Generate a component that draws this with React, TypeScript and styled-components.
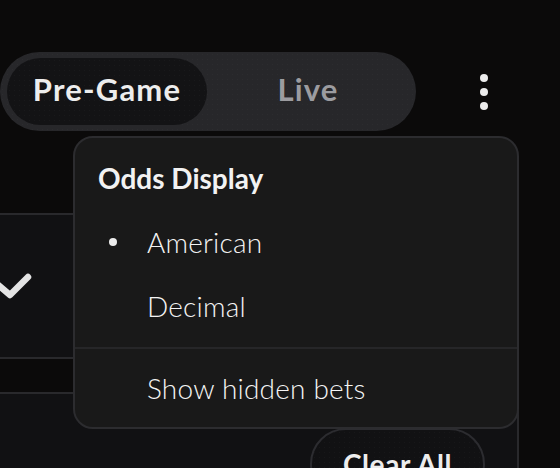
import React from "react";
import styled, { createGlobalStyle } from "styled-components";

const GlobalStyle = createGlobalStyle`
  html, body {
    margin: 0;
    padding: 0;
    background: #0b0a0a;
    overflow: hidden;
    font-family: "Lato", "Inter", sans-serif;
    color: #f2f2f2;
  }
`;

const dots = `radial-gradient(rgba(255, 255, 255, 0.025) 0.8px, transparent 1px) 0 0 / 5px 5px`;

const Page = styled.div`
  position: relative;
  width: 560px;
  height: 468px;
  overflow: hidden;
`;

const Header = styled.div`
  display: flex;
  align-items: center;
  padding-top: 52px;
`;

const Toggle = styled.div`
  display: flex;
  width: 416px;
  height: 79px;
  box-sizing: border-box;
  padding: 6px 7px;
  border-radius: 40px;
  background: ${dots}, #27272a;
`;

const Segment = styled.div<{ $active?: boolean }>`
  display: flex;
  align-items: center;
  justify-content: center;
  width: ${(p) => (p.$active ? "200px" : "auto")};
  flex: ${(p) => (p.$active ? "0 0 auto" : "1")};
  box-sizing: border-box;
  padding-bottom: 5px;
  border-radius: 34px;
  background: ${(p) => (p.$active ? `${dots}, #131315` : "transparent")};
  color: ${(p) => (p.$active ? "#ededed" : "#9c9ca0")};
  font-size: 31px;
  font-weight: 700;
  letter-spacing: 1.2px;
`;

const Kebab = styled.button`
  display: flex;
  align-items: center;
  justify-content: center;
  width: 48px;
  height: 48px;
  margin-left: 44px;
  padding: 0;
  border: none;
  background: transparent;
  color: #ececec;
`;

const Cards = styled.div`
  display: flex;
  flex-direction: column;
  gap: 33px;
  margin-top: 82px;
`;

const Card = styled.div<{ $tall?: boolean }>`
  display: flex;
  align-items: ${(p) => (p.$tall ? "flex-start" : "center")};
  justify-content: ${(p) => (p.$tall ? "flex-end" : "flex-start")};
  width: 549px;
  height: ${(p) => (p.$tall ? "140px" : "146px")};
  margin-left: -30px;
  box-sizing: border-box;
  padding: ${(p) => (p.$tall ? "34px 32px 0 0" : "0 0 0 20px")};
  border: 2px solid #29292c;
  border-radius: 20px;
  background: #111113;
`;

const Check = styled.svg`
  display: block;
  flex: none;
`;

const ClearButton = styled.button`
  display: flex;
  align-items: center;
  justify-content: center;
  width: 175px;
  height: 72px;
  box-sizing: border-box;
  border: 2px solid #2c2c30;
  border-radius: 36px;
  background: ${dots}, #111113;
  color: #ededed;
  font-family: "Lato", "Inter", sans-serif;
  font-size: 28px;
  font-weight: 700;
  letter-spacing: 0.6px;
`;

const Dropdown = styled.div`
  position: absolute;
  top: 136px;
  left: 73px;
  width: 446px;
  box-sizing: border-box;
  border: 2px solid #2c2c2f;
  border-radius: 20px;
  background: #191919;
  overflow: hidden;
`;

const Section = styled.div<{ $last?: boolean }>`
  display: flex;
  flex-direction: column;
  padding: ${(p) => (p.$last ? "0" : "8px 0 9px")};
  border-top: ${(p) => (p.$last ? "2px solid #262628" : "none")};
`;

const Heading = styled.div`
  display: flex;
  align-items: center;
  height: 64px;
  padding-left: 23px;
  font-size: 28px;
  line-height: 28px;
  font-weight: 700;
  color: #f2f2f2;
`;

const Item = styled.div<{ $tall?: boolean }>`
  display: grid;
  grid-template-columns: 49px 1fr;
  align-items: center;
  height: ${(p) => (p.$tall ? "78px" : "64px")};
  padding-left: 23px;
  font-size: 28px;
  line-height: 28px;
  font-weight: 300;
  letter-spacing: 0.2px;
  color: #f4f4f4;
`;

const Bullet = styled.span`
  width: 8px;
  height: 8px;
  margin-left: 11px;
  border-radius: 50%;
  background: #ececec;
`;

const options = [
  { label: "American", selected: true },
  { label: "Decimal", selected: false },
];

export default function App() {
  return (
    <>
      <GlobalStyle />
      <Page>
        <Header>
          <Toggle>
            <Segment $active>Pre-Game</Segment>
            <Segment>Live</Segment>
          </Toggle>
          <Kebab aria-label="More">
            <svg width="48" height="48" viewBox="0 0 48 48" fill="currentColor">
              <circle cx="24" cy="10" r="4" />
              <circle cx="24" cy="24" r="4" />
              <circle cx="24" cy="38" r="4" />
            </svg>
          </Kebab>
        </Header>

        <Cards>
          <Card>
            <Check width="40" height="32" viewBox="0 0 40 32">
              <polyline
                points="5,14 18,25 36,7"
                fill="none"
                stroke="#e4e4e4"
                strokeWidth="6.5"
                strokeLinecap="round"
                strokeLinejoin="round"
              />
            </Check>
          </Card>
          <Card $tall>
            <ClearButton>Clear All</ClearButton>
          </Card>
        </Cards>

        <Dropdown>
          <Section>
            <Heading>Odds Display</Heading>
            {options.map((o) => (
              <Item key={o.label}>
                {o.selected ? <Bullet /> : <span />}
                <span>{o.label}</span>
              </Item>
            ))}
          </Section>
          <Section $last>
            <Item $tall>
              <span />
              <span>Show hidden bets</span>
            </Item>
          </Section>
        </Dropdown>
      </Page>
    </>
  );
}
